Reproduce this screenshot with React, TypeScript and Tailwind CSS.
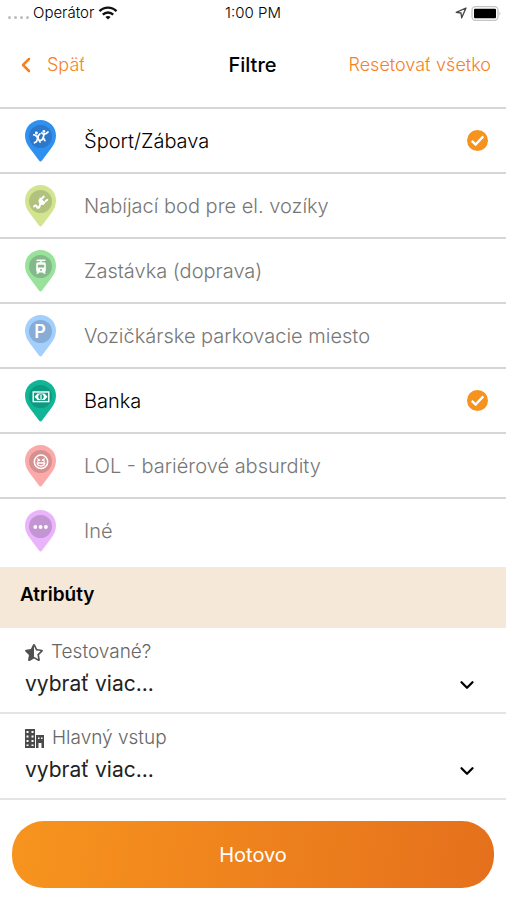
import React from 'react';
import { ChevronDown, ChevronLeft } from 'lucide-react';
import { FaStarHalfAlt } from 'react-icons/fa';

interface Category {
  id: string;
  label: string;
  pin: string;
  disc: string;
  glyph: React.ReactNode;
}

const categories: Category[] = [
  {
    id: 'sport',
    label: 'Šport/Zábava',
    pin: '#2f90f0',
    disc: '#2b78cc',
    glyph: (
      <g fill="none" stroke="#fff" strokeWidth="1.7" strokeLinecap="round" strokeLinejoin="round">
        <path d="M8.7 14.8l2.4.8 1.5 2.6-1 3.3-2.1 1.3M15 13.8l-2 2.3.4 3 1.7 3M23 12l-2 1.7-2.8.4-1.5-1.2M19.2 14l-1 3.6 1.7 3.1M18.2 17.6l-1.4 2.6-2.1.1" />
        <circle cx="11.4" cy="13" r=".6" fill="#fff" />
        <circle cx="18.9" cy="11.4" r=".6" fill="#fff" />
      </g>
    ),
  },
  {
    id: 'charger',
    label: 'Nabíjací bod pre el. vozíky',
    pin: '#d3e48f',
    disc: '#b1c17e',
    glyph: (
      <g fill="none" stroke="#fff" strokeLinecap="round" strokeLinejoin="round">
        <path d="M9 21.5c1.200-1.500 2.300-1.500 2.800.2s2 1.500 2.700-.2l.7-2.500" strokeWidth="2" />
        <path d="M15.200 13.200l4.800 4.800c-1.500 2-4 2-5.200.5s-1.300-3.600.4-5.300z" fill="#fff" strokeWidth="1" />
        <path d="M17 13.500l1.800-2M20.300 16.500l2-1.800" strokeWidth="1.900" />
      </g>
    ),
  },
  {
    id: 'transport',
    label: 'Zastávka (doprava)',
    pin: '#99e29c',
    disc: '#84ba89',
    glyph: (
      <g>
        <path d="M11.500 10.300h9" stroke="#fff" strokeWidth="1.500" />
        <path d="M16 10.500v2" stroke="#fff" strokeWidth="1.500" />
        <path fill="#fff" d="M13 12.300h6q1.800 0 1.800 1.800v6.400q0 1-1 1.500l1 1.700h-1.900l-1.200-1.300h-3.400L13.100 23.700h-1.900l1-1.700q-1-.5-1-1.500v-6.400q0-1.800 1.800-1.800z" />
        <path fill="#84ba89" d="M12.800 14.700h6.400v2.700h-6.400z" />
        <circle cx="16" cy="20" r="1" fill="#84ba89" />
      </g>
    ),
  },
  {
    id: 'parking',
    label: 'Vozičkárske parkovacie miesto',
    pin: '#a3cffc',
    disc: '#87acd6',
    glyph: (
      <text x="15" y="22.500" textAnchor="middle" fill="#fff" className="font-['Inter',sans-serif] text-[18px] font-semibold">
        P
      </text>
    ),
  },
  {
    id: 'bank',
    label: 'Banka',
    pin: '#10b596',
    disc: '#0c9a80',
    glyph: (
      <g>
        <rect x="8.200" y="12" width="15.600" height="9.600" fill="none" stroke="#fff" strokeWidth="1.400" />
        <path
          fill="#fff"
          fillRule="evenodd"
          d="M12.500 13.500h7l3 3.300-3 3.300h-7l-3-3.300zM16 14c-1.700 0-2.800 1.200-2.800 2.800s1.100 2.800 2.800 2.800 2.800-1.200 2.800-2.800S17.700 14 16 14z"
        />
        <path d="M16 14.500v4.600" stroke="#fff" strokeWidth="1.200" />
      </g>
    ),
  },
  {
    id: 'lol',
    label: 'LOL - bariérové absurdity',
    pin: '#fba9a9',
    disc: '#d59192',
    glyph: (
      <g fill="none" stroke="#fff" strokeWidth="1.500" strokeLinecap="round" strokeLinejoin="round">
        <circle cx="16" cy="16.800" r="6.700" />
        <path d="M12.500 13.800l2.200 1.300-2.200 1M19.500 13.800l-2.200 1.300 2.200 1" strokeWidth="1.200" />
        <path d="M12.200 18h7.600c-.5 4-7.100 4-7.600 0z" strokeWidth="1.300" />
      </g>
    ),
  },
  {
    id: 'other',
    label: 'Iné',
    pin: '#e9b4fb',
    disc: '#c495d3',
    glyph: (
      <g fill="#fff">
        <circle cx="10.300" cy="17" r="1.900" />
        <circle cx="15.600" cy="17" r="1.900" />
        <circle cx="20.900" cy="17" r="1.900" />
      </g>
    ),
  },
];

const BuildingIcon = () => (
  <svg viewBox="0 0 19 19" className="h-[19px] w-[19px]">
    <path fill="#4a4a4a" d="M0 0h10v19H0zM11 6h8v13h-2.500v-5h-3v5H11z" />
    <path
      fill="#fff"
      d="M1.500 2h2v2h-2zM6.500 2h2v2h-2zM1.500 6.500h2v2h-2zM6.500 6.500h2v2h-2zM1.500 11h2v2h-2zM6.500 11h2v2h-2zM1.500 15.500h2v1.500h-2zM6.500 15.500h2v1.500h-2zM13 8.500h1.500V10H13zM16 8.500h1.500V10H16z"
    />
  </svg>
);

const attributes = [
  { id: 'tested', label: 'Testované?', icon: <FaStarHalfAlt className="h-[17px] w-[18px] text-[#505050]" /> },
  { id: 'entrance', label: 'Hlavný vstup', icon: <BuildingIcon /> },
];

const StatusBar = () => (
  <div className="grid h-[26px] grid-cols-[1fr_auto_1fr] items-center px-2 text-[15px] font-light text-black">
    <div className="flex items-center gap-1">
      <span className="flex gap-[3px] pt-2">
        <i className="h-[3px] w-[3px] rounded-full bg-[#bdbdbd]" />
        <i className="h-[3px] w-[3px] rounded-full bg-[#bdbdbd]" />
        <i className="h-[3px] w-[3px] rounded-full bg-[#bdbdbd]" />
        <i className="h-[3px] w-[3px] rounded-full bg-[#bdbdbd]" />
      </span>
      <span>Operátor</span>
      <svg viewBox="0 0 20 14" className="h-[14px] w-5" fill="none" stroke="#111" strokeWidth="2.400">
        <path d="M1.500 5.200c4.800-4.800 12.200-4.800 17 0M4.800 8.600c3-2.900 7.400-2.900 10.400 0" />
        <path d="M10 13.600l-2.600-2.700c1.500-1.300 3.700-1.300 5.200 0z" fill="#111" stroke="none" />
      </svg>
    </div>
    <span>1:00 PM</span>
    <div className="flex items-center justify-end gap-1">
      <svg viewBox="0 0 12 12" className="h-3 w-3" fill="none" stroke="#444" strokeWidth="1.300" strokeLinejoin="round">
        <path d="M11 1L1.200 5.300l4.800.7.700 4.800z" />
      </svg>
      <svg viewBox="0 0 31 15" className="-mr-1 h-[15px] w-[31px]">
        <rect x="1" y=".7" width="26" height="13.600" rx="3.500" fill="#fff" stroke="#c4c4c4" strokeWidth="1.300" />
        <rect x="3" y="2.700" width="22" height="9.600" rx="1" fill="#000" />
        <path d="M28.500 5.500q2 2 0 4z" fill="#c4c4c4" />
      </svg>
    </div>
  </div>
);

const Pin: React.FC<{ category: Category }> = ({ category }) => (
  <svg viewBox="0 0 31 42" className="h-[42px] w-[31px] shrink-0">
    <path fill={category.pin} d="M15.500 0C24 0 31 7 31 15.500c0 5-2 9-5 13L17 40.500q-1.500 2-3 0L5 28.500c-3-4-5-8-5-13C0 7 7 0 15.500 0z" />
    <circle cx="15.500" cy="16.500" r="11.500" fill={category.disc} />
    {category.glyph}
  </svg>
);

const App: React.FC = () => {
  const [selected, setSelected] = React.useState<string[]>(['sport', 'bank']);

  const toggle = (id: string) => {
    setSelected(selected.includes(id) ? selected.filter((s) => s !== id) : [...selected, id]);
  };

  return (
    <div className="min-h-screen bg-white font-['Inter','Liberation_Sans',sans-serif]">
      <StatusBar />

      <header className="grid h-[81px] grid-cols-[1fr_auto_1fr] items-center pr-[15px] pb-1 pl-[14px]">
        <button className="flex items-center gap-[9px] justify-self-start text-lg font-light text-[#f5821f]">
          <ChevronLeft className="h-6 w-6" strokeWidth={2.5} />
          Späť
        </button>
        <h1 className="text-xl font-medium text-black">Filtre</h1>
        <button className="justify-self-end text-lg font-light whitespace-nowrap text-[#f5821f]">Resetovať všetko</button>
      </header>

      <ul>
        {categories.map((category) => {
          const checked = selected.includes(category.id);
          return (
            <li key={category.id} className="border-t-2 border-[#d6d6d6]">
              <label className="flex h-[63px] items-center pr-[18px] pl-[25px]">
                <Pin category={category} />
                <span className={`flex-1 pl-7 text-xl font-light ${checked ? 'text-black' : 'text-[#777]'}`}>{category.label}</span>
                <span className="relative h-[21px] w-[21px]">
                  <input
                    type="checkbox"
                    checked={checked}
                    onChange={() => toggle(category.id)}
                    className="block h-[21px] w-[21px] appearance-none rounded-full checked:bg-[#f6921e]"
                  />
                  {checked && (
                    <svg viewBox="0 0 21 21" className="pointer-events-none absolute inset-0" fill="none" stroke="#fff" strokeWidth="2.400">
                      <path d="M4.800 10.800l3.800 3.800 7.700-8.200" />
                    </svg>
                  )}
                </span>
              </label>
            </li>
          );
        })}
      </ul>

      <h2 className="mt-[5px] flex h-[61px] items-center bg-[#f6e8d8] px-5 pb-1 text-[19px] font-semibold text-black">Atribúty</h2>

      {attributes.map((attribute) => (
        <div key={attribute.id} className="border-b-2 border-[#e4e4e4] py-3 pr-7 pl-[25px]">
          <label htmlFor={attribute.id} className="flex h-6 items-center gap-2 text-[19px] font-light text-[#666]">
            {attribute.icon}
            {attribute.label}
          </label>
          <div className="relative mt-1 h-8">
            <select id={attribute.id} className="h-8 w-full appearance-none bg-transparent text-[21px] font-normal text-[#222]">
              <option>vybrať viac...</option>
            </select>
            <ChevronDown className="pointer-events-none absolute top-[6px] right-0 h-[22px] w-[22px] text-black" strokeWidth={2.5} />
          </div>
        </div>
      ))}

      <div className="px-3 pt-[21px] pb-3">
        <button className="h-[67px] w-full rounded-[32px] bg-linear-100 from-[#f7941e] to-[#e5701c] text-xl text-white">Hotovo</button>
      </div>
    </div>
  );
};

export default App;
